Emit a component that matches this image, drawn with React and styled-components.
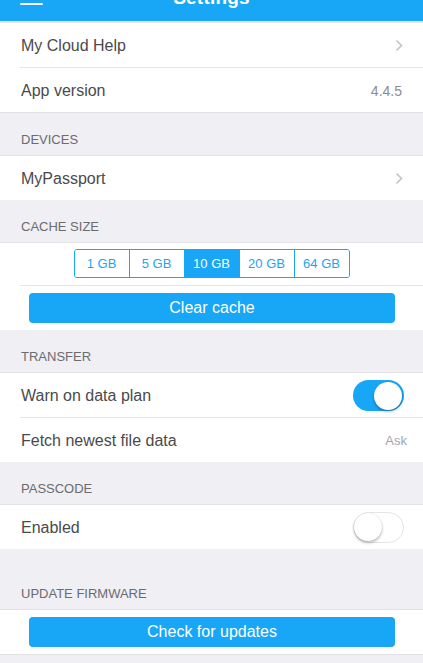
import React, { useState } from "react";
import styled, { createGlobalStyle } from "styled-components";

const BLUE = "#18a6f6";

const GlobalStyle = createGlobalStyle`
  html, body {
    margin: 0;
    padding: 0;
    background: #efeff4;
    font-family: "Liberation Sans", Arial, sans-serif;
    -webkit-font-smoothing: antialiased;
  }
`;

const sizes = ["1 GB", "5 GB", "10 GB", "20 GB", "64 GB"];

export default function App() {
  const [cache, setCache] = useState("10 GB");
  const [warn, setWarn] = useState(true);
  const [passcode, setPasscode] = useState(false);

  return (
    <Page>
      <GlobalStyle />
      <Header>
        <Burger />
        <HeaderTitle>Settings</HeaderTitle>
      </Header>

      <Group first>
        <Row>
          <Label>My Cloud Help</Label>
          <Chevron />
        </Row>
        <Row>
          <Label>App version</Label>
          <Value>4.4.5</Value>
        </Row>
      </Group>

      <SectionTitle>DEVICES</SectionTitle>
      <Group>
        <Row>
          <Label>MyPassport</Label>
          <Chevron />
        </Row>
      </Group>

      <SectionTitle>CACHE SIZE</SectionTitle>
      <Group>
        <SegmentRow>
          <Segmented>
            {sizes.map((s) => (
              <Segment key={s} active={s === cache} onClick={() => setCache(s)}>
                {s}
              </Segment>
            ))}
          </Segmented>
        </SegmentRow>
        <ButtonRow>
          <BlueButton>Clear cache</BlueButton>
        </ButtonRow>
      </Group>

      <SectionTitle>TRANSFER</SectionTitle>
      <Group>
        <Row>
          <Label>Warn on data plan</Label>
          <Toggle on={warn} onClick={() => setWarn(!warn)}>
            <Knob on={warn} />
          </Toggle>
        </Row>
        <Row>
          <Label>Fetch newest file data</Label>
          <Value light>Ask</Value>
        </Row>
      </Group>

      <SectionTitle>PASSCODE</SectionTitle>
      <Group>
        <Row>
          <Label>Enabled</Label>
          <Toggle on={passcode} onClick={() => setPasscode(!passcode)}>
            <Knob on={passcode} />
          </Toggle>
        </Row>
      </Group>

      <SectionTitle tall>UPDATE FIRMWARE</SectionTitle>
      <Group last>
        <ButtonRow>
          <BlueButton>Check for updates</BlueButton>
        </ButtonRow>
      </Group>
    </Page>
  );
}

function Chevron() {
  return (
    <ChevronSvg width="8" height="13" viewBox="0 0 8 13">
      <path d="M1.5 1.5 L6.5 6.5 L1.5 11.5" fill="none" stroke="#c4c4c9" strokeWidth="1.6" />
    </ChevronSvg>
  );
}

const Page = styled.div`
  width: 423px;
  min-height: 663px;
  background: #efeff4;
  overflow: hidden;
`;

const Header = styled.div`
  position: relative;
  height: 21px;
  background: ${BLUE};
  border-bottom: 2px solid #e6e6ea;
  overflow: hidden;
  display: flex;
  justify-content: center;
  align-items: flex-end;
`;

const Burger = styled.span`
  position: absolute;
  left: 20px;
  top: 3px;
  width: 23px;
  height: 2px;
  border-radius: 1px;
  background: #fff;
`;

const HeaderTitle = styled.div`
  color: #fff;
  font-size: 19px;
  font-weight: bold;
  line-height: 22px;
  margin-bottom: 12px;
  letter-spacing: 0.2px;
`;

const Group = styled.div`
  background: #fff;
  border-top: ${({ first }) => (first ? "none" : "1px solid #e2e2e6")};
  border-bottom: ${({ first, last }) => (first || last ? "1px solid #e2e2e6" : "none")};
`;

const Row = styled.div`
  height: 44px;
  box-sizing: border-box;
  padding-top: 1px;
  margin-left: 20px;
  padding-right: 21px;
  display: flex;
  align-items: center;
  justify-content: space-between;
  & + & {
    height: 45px;
    border-top: 1px solid #e6e6ea;
  }
`;

const Label = styled.span`
  font-size: 16px;
  color: #4a4a4d;
  padding-left: 1px;
`;

const Value = styled.span`
  font-size: ${({ light }) => (light ? "13px" : "14px")};
  color: ${({ light }) => (light ? "#a6a6aa" : "#8c8c91")};
  margin-right: ${({ light }) => (light ? "-5px" : "0")};
`;

const ChevronSvg = styled.svg`
  display: block;
  margin-right: -1px;
`;

const SectionTitle = styled.div`
  box-sizing: border-box;
  height: ${({ tall }) => (tall ? "60px" : "42px")};
  padding: 0 0 7px 21px;
  display: flex;
  align-items: flex-end;
  font-size: 13px;
  line-height: 16px;
  color: #6b6b70;
`;

const SegmentRow = styled.div`
  padding: 6px 20px 7px 0;
  margin-left: 20px;
  display: flex;
  justify-content: center;
  border-bottom: 1px solid #e6e6ea;
`;

const Segmented = styled.div`
  display: flex;
  border: 1px solid ${BLUE};
  border-radius: 3px;
  overflow: hidden;
`;

const Segment = styled.div`
  width: 54px;
  height: 27px;
  display: flex;
  align-items: center;
  justify-content: center;
  font-size: 13px;
  color: ${({ active }) => (active ? "#fff" : BLUE)};
  background: ${({ active }) => (active ? BLUE : "#fff")};
  cursor: pointer;
  & + & {
    border-left: 1px solid ${BLUE};
  }
`;

const ButtonRow = styled.div`
  padding: 7px 28px 7px 29px;
`;

const BlueButton = styled.button`
  display: block;
  width: 100%;
  height: 30px;
  border: none;
  border-radius: 4px;
  background: ${BLUE};
  color: #fff;
  font-family: inherit;
  font-size: 16px;
  padding: 0;
`;

const Toggle = styled.div`
  position: relative;
  width: 51px;
  height: 31px;
  box-sizing: border-box;
  border-radius: 16px;
  background: ${({ on }) => (on ? BLUE : "#fff")};
  border: ${({ on }) => (on ? "none" : "1.5px solid #e4e4e8")};
  margin-right: -2px;
  cursor: pointer;
`;

const Knob = styled.span`
  position: absolute;
  top: ${({ on }) => (on ? "1.5px" : "0")};
  left: ${({ on }) => (on ? "21px" : "0")};
  width: 28px;
  height: 28px;
  border-radius: 50%;
  background: #fff;
  box-shadow: 0 2px 3px rgba(0, 0, 0, 0.25), 0 0 1px rgba(0, 0, 0, 0.2);
`;
